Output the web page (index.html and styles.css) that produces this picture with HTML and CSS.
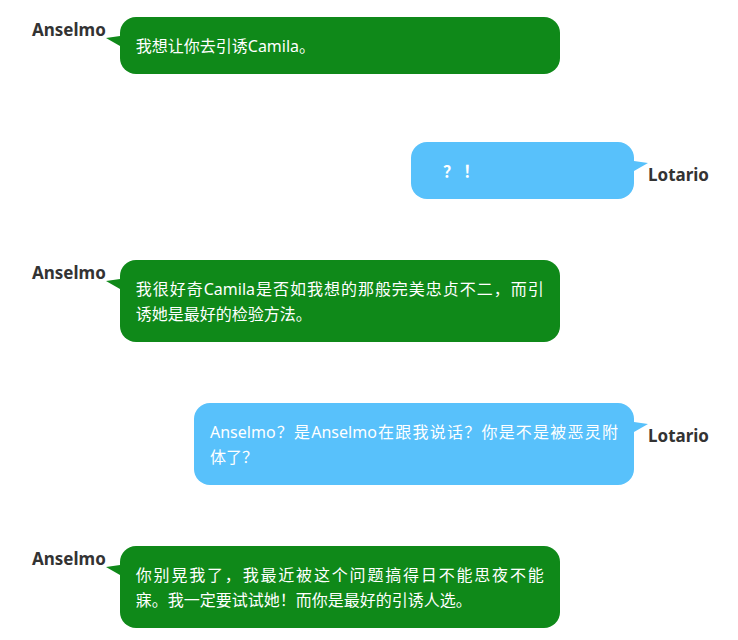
FILE: index.html
```html
<!DOCTYPE html>
<html lang="zh-CN">
<head>
<meta charset="utf-8">
<title>Anselmo / Lotario</title>
<link rel="stylesheet" href="styles.css">
</head>
<body>
<main class="chat">
  <article class="message">
    <strong class="name">Anselmo</strong>
    <svg class="tail" viewBox="0 0 14 10" aria-hidden="true"><path d="M0 2 14 0V10Z"/></svg>
    <p class="bubble">我想让你去引诱Camila。</p>
  </article>
  <article class="message reply brief">
    <strong class="name">Lotario</strong>
    <svg class="tail" viewBox="0 0 14 10" aria-hidden="true"><path d="M14 2 0 0V10Z"/></svg>
    <p class="bubble"><b>？ ！</b></p>
  </article>
  <article class="message">
    <strong class="name">Anselmo</strong>
    <svg class="tail" viewBox="0 0 14 10" aria-hidden="true"><path d="M0 2 14 0V10Z"/></svg>
    <p class="bubble">我很好奇Camila是否如我想的那般完美忠贞不二，而引<span class="keep">诱她</span>是最好的检验方法。</p>
  </article>
  <article class="message reply">
    <strong class="name">Lotario</strong>
    <svg class="tail" viewBox="0 0 14 10" aria-hidden="true"><path d="M14 2 0 0V10Z"/></svg>
    <p class="bubble">Anselmo？是Anselmo在跟我说话？你是不是被恶灵附<span class="keep">体了</span>？</p>
  </article>
  <article class="message">
    <strong class="name">Anselmo</strong>
    <svg class="tail" viewBox="0 0 14 10" aria-hidden="true"><path d="M0 2 14 0V10Z"/></svg>
    <p class="bubble">你别晃我了，我最近被这个问题搞得日不能思夜不能<span class="keep">寐。我</span>一定要试试她！而你是最好的引诱人选。</p>
  </article>
</main>
</body>
</html>
```
FILE: styles.css
```css
body {
  margin: 0;
  background: #fff;
  color: #333;
  font: 16px/25px "Noto Sans", "Noto Sans CJK SC", sans-serif;
}

.chat {
  display: flex;
  flex-direction: column;
  gap: 61px;
  padding: 17px 29px 12px 32px;
}

.message {
  display: flex;
  align-items: flex-start;
}

.reply {
  flex-direction: row-reverse;
}

.name {
  font-size: 17px;
  font-weight: 700;
}

.tail {
  flex: none;
  width: 14px;
  height: 10px;
  margin-top: 19px;
  fill: #0f8919;
}

.bubble {
  box-sizing: border-box;
  width: 440px;
  margin: 0;
  padding: 17px 16px 15px;
  border-radius: 16px;
  background: #0f8919;
  color: #fff;
  text-align: justify;
}

.keep {
  white-space: nowrap;
}

.reply .name {
  margin-top: 20px;
}

.reply .tail {
  fill: #58c1fb;
}

.reply .bubble {
  background: #58c1fb;
}

.brief {
  margin-top: 7px;
}

.brief .bubble {
  width: 223px;
  padding-left: 32px;
}
```
